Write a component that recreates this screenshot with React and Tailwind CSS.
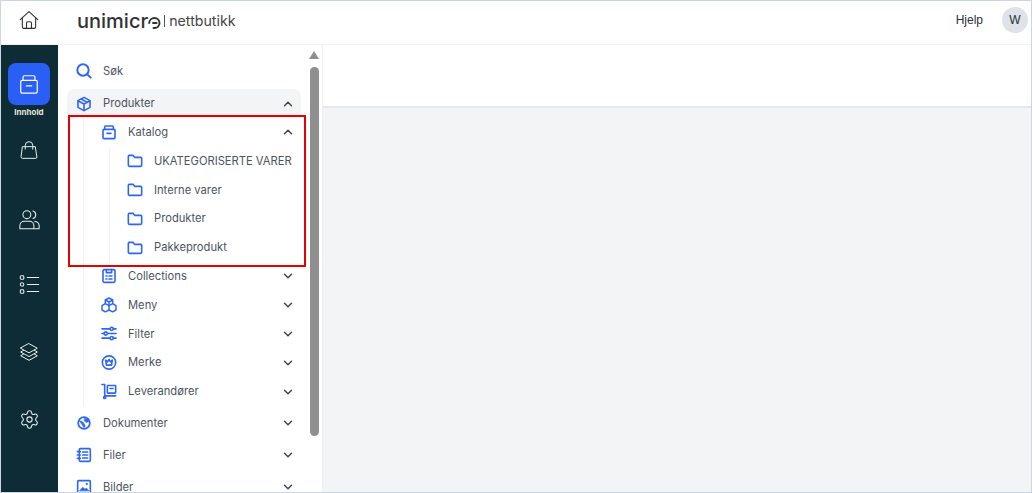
import { ChevronDown, ChevronUp, Settings } from "lucide-react";

function Svg({ size = 16, sw = 2.4, children, className }) {
  return (
    <svg
      width={size}
      height={size}
      viewBox="0 0 24 24"
      fill="none"
      stroke="currentColor"
      strokeWidth={sw}
      strokeLinecap="round"
      strokeLinejoin="round"
      className={className}
    >
      {children}
    </svg>
  );
}

const SearchIcon = (p) => (
  <Svg {...p} sw={3}>
    <circle cx="10.5" cy="10.5" r="8.5" />
    <path d="M17 17l5 5" />
  </Svg>
);
const BoxIcon = (p) => (
  <Svg {...p}>
    <path d="M12 2l9 5v10l-9 5-9-5V7z" />
    <path d="M3.5 7.5L12 12l8.5-4.5M12 12v9.5M8 4.5l8.5 5" />
  </Svg>
);
const ArchiveIcon = ({ sw = 2.4, ...p }) => (
  <Svg {...p} sw={sw}>
    <path d="M5.5 8V4.5A1.5 1.5 0 0 1 7 3h10a1.5 1.5 0 0 1 1.5 1.5V8" />
    <rect x="3" y="8" width="18" height="14" rx="1.5" />
    <path d="M9 14h6" />
  </Svg>
);
const FolderIcon = (p) => (
  <Svg {...p}>
    <path d="M2 5a1.5 1.5 0 0 1 1.5-1.5H9l2.5 3h9A1.5 1.5 0 0 1 22 8v10.5a1.5 1.5 0 0 1-1.5 1.5h-17A1.5 1.5 0 0 1 2 18.5z" />
  </Svg>
);
const CollectionsIcon = (p) => (
  <Svg {...p}>
    <rect x="3" y="2.5" width="18" height="19" rx="2" />
    <path d="M8 2.5V7h8V2.5M7.5 12H9M12 12h4.500M7.5 16.5H9M12 16.500h4.500" />
  </Svg>
);
const MenuCubesIcon = (p) => (
  <Svg {...p} size={18} sw={2.2}>
    <path d="M12 1.5l5.500 3v5.500L12 13 6.500 10V4.500z" />
    <path d="M6.500 4.500L12 7.500l5.500-3M12 7.500V13" />
    <path d="M6.500 10L1.500 13v6.500l5 2.800L12 19.500V13M17.500 10l5 3v6.500l-5 2.800-5.500-2.800" />
  </Svg>
);
const SlidersIcon = (p) => (
  <Svg {...p} size={17}>
    <path d="M1.500 5h12M19 5h3.500M1.500 12h3M10 12h12.500M1.500 19h12M19 19h3.500" />
    <circle cx="16" cy="5" r="2.400" />
    <circle cx="7" cy="12" r="2.400" />
    <circle cx="16" cy="19" r="2.400" />
  </Svg>
);
const BrandIcon = (p) => (
  <Svg {...p} size={17}>
    <circle cx="12" cy="12" r="10" />
    <path d="M7 8.500l2.800 2.500L12 7.500l2.200 3.500L17 8.500 15.800 16H8.200z" />
  </Svg>
);
const SupplierIcon = (p) => (
  <Svg {...p} size={17}>
    <path d="M1.500 1.500H5.500V18.500h16.500" />
    <rect x="9.500" y="3" width="12.500" height="11.500" rx="1" />
    <path d="M13.500 7.500h4.500" />
    <circle cx="5.500" cy="21" r="1.600" />
  </Svg>
);
const DocumentIcon = (p) => (
  <Svg {...p} size={14} sw={3}>
    <circle cx="12" cy="12" r="10" />
    <path
      d="M4 8l5 1.500 3.500 4 1.500 3.500-2 3-2.500-4-2-3zM13 4l5.500 1.500 1.500 4.500-4.500 1-3-3z"
      fill="currentColor"
      strokeWidth="1"
    />
  </Svg>
);
const NotebookIcon = (p) => (
  <Svg {...p}>
    <rect x="5" y="2.500" width="16.500" height="19" rx="1.500" />
    <path d="M2 7h4.500M2 12h4.500M2 17h4.500M10 7.500h7.500M10 12h7.500M10 16.500h7.500" />
  </Svg>
);
const ImageIcon = (p) => (
  <Svg {...p}>
    <rect x="2.500" y="2.500" width="19" height="19" rx="1.500" />
    <path d="M5.500 17.500l4.500-5 3.500 3 2-2 3.500 4z" fill="currentColor" strokeWidth="1" />
    <circle cx="16" cy="7.500" r="1.200" fill="currentColor" strokeWidth="1" />
  </Svg>
);

// sidebar icons
const HomeIcon = (p) => (
  <Svg {...p} sw={1.300}>
    <path d="M1.500 11.500L12 2l10.500 9.500" />
    <path d="M4 9.500V20a2 2 0 0 0 2 2h12a2 2 0 0 0 2-2V9.500" />
    <path d="M9 22v-6.500a1.500 1.500 0 0 1 1.500-1.500h3a1.500 1.500 0 0 1 1.500 1.500V22" />
  </Svg>
);
const BagIcon = (p) => (
  <Svg {...p} sw={1.200}>
    <path d="M4.500 8h15l2 12.500a1.500 1.500 0 0 1-1.500 1.500H4a1.500 1.500 0 0 1-1.500-1.500z" />
    <path d="M7.500 11V6.500a4.500 4.500 0 0 1 9 0V11" />
  </Svg>
);
const PeopleIcon = (p) => (
  <Svg {...p} sw={1.200}>
    <circle cx="9" cy="6.500" r="4.500" />
    <path d="M16 2.200a4.500 4.500 0 0 1 0 8.600" />
    <path d="M1 22.500V19a5 5 0 0 1 5-5h6a5 5 0 0 1 5 5v3.500zM18 14.200a5 5 0 0 1 5 4.800v3.500h-5" />
  </Svg>
);
const ChecklistIcon = (p) => (
  <Svg {...p} sw={1.200}>
    <rect x="1.500" y="2" width="4" height="4" rx="1" />
    <rect x="1.500" y="10" width="4" height="4" rx="2" />
    <rect x="1.500" y="18" width="4" height="4" rx="1" />
    <path d="M9.500 4h13M9.500 12h13M9.500 20h13" />
  </Svg>
);
const StackIcon = (p) => (
  <Svg {...p} sw={1.200}>
    <path d="M12 2l10 5.500-10 5.500L2 7.500z" />
    <path d="M5.500 10L2 12l10 5.500L22 12l-3.500-2" />
    <path d="M5.500 14.500L2 16.500 12 22l10-5.500-3.500-2" />
  </Svg>
);

function Row({ icon: Icon, label, open, hasChevron = true }) {
  return (
    <div className="flex h-full items-center pr-[6px]">
      <span className="flex w-4 justify-center text-[#2f66f0]">
        <Icon />
      </span>
      <span className="ml-[11px] flex-1 text-[11.2px] whitespace-nowrap text-[#4b5563]">
        {label}
      </span>
      {hasChevron &&
        (open ? (
          <ChevronUp size={14} strokeWidth={2.4} className="text-[#374151]" />
        ) : (
          <ChevronDown size={14} strokeWidth={2.4} className="text-[#374151]" />
        ))}
    </div>
  );
}

const folders = ["UKATEGORISERTE VARER", "Interne varer", "Produkter", "Pakkeprodukt"];
const subSections = [
  { label: "Collections", icon: CollectionsIcon },
  { label: "Meny", icon: MenuCubesIcon },
  { label: "Filter", icon: SlidersIcon },
  { label: "Merke", icon: BrandIcon },
  { label: "Leverandører", icon: SupplierIcon },
];

export default function App() {
  return (
    <div className="flex h-[493px] w-[1032px] flex-col overflow-hidden border border-[#cbd5e1] bg-white font-['Inter','Liberation_Sans',sans-serif]">
      <header className="flex h-[44px] shrink-0 items-center border-b border-[#eef0f2] pb-[6px]">
        <div className="flex w-[56px] justify-center">
          <HomeIcon size={20} sw={1.400} className="text-[#27313a]" />
        </div>
        <div className="mt-[3px] ml-[20px] flex items-center text-[#333]">
          <span className="flex items-center text-xl leading-none font-medium">
            unimicr
            <svg width="13" height="12" viewBox="0 0 13 12" fill="none" className="mt-[3px]">
              <path
                d="M1.200 6A5.200 5.200 0 0 1 6.500 1a5 5 0 0 1 0 10H5.500M8.600 6H5"
                stroke="currentColor"
                strokeWidth="1.900"
                strokeLinecap="round"
              />
            </svg>
          </span>
          <span className="mr-[4px] ml-[3px] h-[12px] w-px bg-[#555]" />
          <span className="text-[14.2px] leading-none text-[#444]">nettbutikk</span>
        </div>
        <div className="ml-auto flex items-center pr-[3px] font-['Liberation_Sans',sans-serif] text-xs text-[#27313a]">
          <span>Hjelp</span>
          <span className="ml-[19px] flex h-[26px] w-[26px] items-center justify-center rounded-full bg-[#dde3e8]">
            W
          </span>
        </div>
      </header>

      <div className="flex min-h-0 flex-1">
        <aside className="flex w-[57px] shrink-0 flex-col items-center bg-[#0d2c35] pt-[18px] pr-px text-[#e8eef0]">
          <div className="flex h-[42px] w-[42px] items-center justify-center rounded-lg bg-[#2a5ff6]">
            <ArchiveIcon size={22} sw={1.300} className="text-white" />
          </div>
          <span className="mt-[1px] text-[8px] leading-[12px] font-bold text-[#e3e6d8]">Innhold</span>
          <BagIcon size={20} className="mt-[22px]" />
          <PeopleIcon size={21} className="mt-[49px]" />
          <ChecklistIcon size={21} className="mt-[44px]" />
          <StackIcon size={20} className="mt-[47px]" />
          <Settings size={21} strokeWidth={1.200} className="mt-[47px]" />
        </aside>

        <nav className="flex w-[265px] shrink-0 overflow-hidden border-r border-[#eef0f2]">
          <div className="w-[243px] shrink-0 pt-[12px] pl-[9px]">
            <div className="mb-1 h-7 pl-[9px]">
              <Row icon={SearchIcon} label="Søk" hasChevron={false} />
            </div>
            <div className="relative w-[234px]">
              <div className="h-[29px] rounded-t-lg bg-[#f3f4f6] pl-[9px]">
                <Row icon={BoxIcon} label="Produkter" open />
              </div>
              <div className="ml-[16px] border-l border-[#f0f1f3] pl-[17px]">
                <div className="h-[28.8px]">
                  <Row icon={ArchiveIcon} label="Katalog" open />
                </div>
                <div className="ml-[8px] border-l border-[#f0f1f3] pl-[17px]">
                  {folders.map((name) => (
                    <div key={name} className="h-[28.8px]">
                      <Row icon={FolderIcon} label={name} hasChevron={false} />
                    </div>
                  ))}
                </div>
                {subSections.map((item) => (
                  <div key={item.label} className="h-[28.8px]">
                    <Row icon={item.icon} label={item.label} />
                  </div>
                ))}
              </div>
              {/* red annotation box on top of the list */}
              <div className="absolute top-[26px] left-px h-[152px] w-[238px] border-2 border-[#e60000]" />
            </div>
            <div className="mt-[3.5px] h-7 w-[234px] pl-[9px]">
              <Row icon={DocumentIcon} label="Dokumenter" />
            </div>
            <div className="mt-1 h-7 w-[234px] pl-[9px]">
              <Row icon={NotebookIcon} label="Filer" />
            </div>
            <div className="mt-1 h-7 w-[234px] pl-[9px]">
              <Row icon={ImageIcon} label="Bilder" />
            </div>
          </div>
          <div className="flex flex-1 flex-col items-center pt-[6px] pl-[5px]">
            <span className="h-0 w-0 border-x-[5px] border-b-[8px] border-x-transparent border-b-[#8f8f8f]" />
            <span className="mt-[8px] h-[369px] w-[9px] rounded-full bg-[#8f8f8f]" />
          </div>
        </nav>

        <main className="flex flex-1 flex-col bg-[#f3f4f6]">
          <div className="h-[63px] border-b-2 border-[#e5e7eb] bg-white" />
        </main>
      </div>
    </div>
  );
}
